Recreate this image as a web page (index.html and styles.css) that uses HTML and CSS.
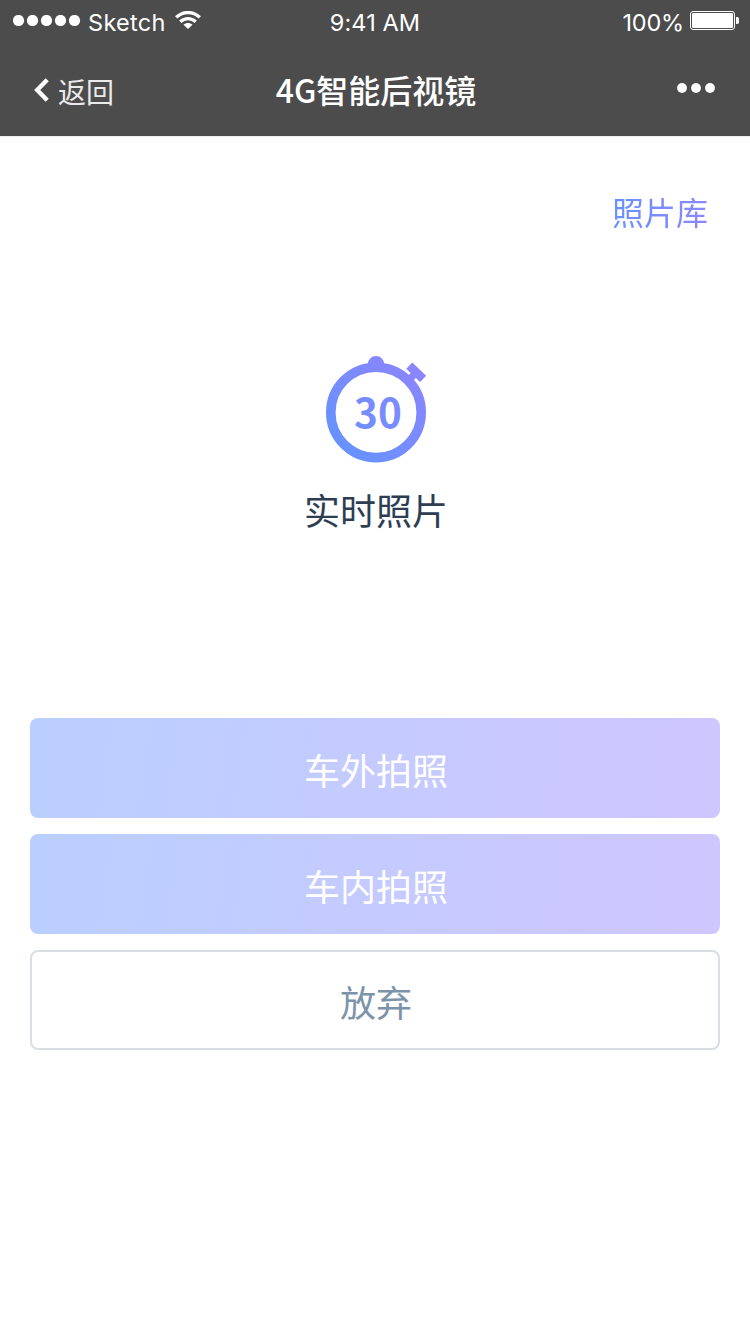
FILE: index.html
```html
<!DOCTYPE html>
<html lang="zh-CN">
<head>
<meta charset="utf-8">
<title>4G智能后视镜</title>
<link rel="stylesheet" href="styles.css">
</head>
<body>
<header class="header">
  <div class="status">
    <div class="status-left">
      <svg class="signal" width="68" height="12" viewBox="0 0 68 12" fill="#fff"><circle cx="5.5" cy="5.5" r="5.6"/><circle cx="19.5" cy="5.5" r="5.6"/><circle cx="33.5" cy="5.5" r="5.6"/><circle cx="47.5" cy="5.5" r="5.6"/><circle cx="61.5" cy="5.5" r="5.6"/></svg>
      <span class="carrier">Sketch</span>
      <svg class="wifi" width="26" height="19" viewBox="0 0 26 19"><g fill="none" stroke="#fff" stroke-width="3.3"><path d="M1.2 6.4C8-.1 18-.1 24.8 6.4"/><path d="M5.3 10.8c4.4-4.2 11-4.2 15.4 0"/></g><path fill="#fff" d="M8.5 13.7c2.6-2.4 6.4-2.4 9 0L13 18z"/></svg>
    </div>
    <div class="clock">9:41 AM</div>
    <div class="status-right">
      <span class="percent">100%</span>
      <svg class="battery" width="49" height="19" viewBox="0 0 49 19"><rect x=".5" y=".5" width="44" height="18" rx="2.5" fill="none" stroke="#fff"/><rect x="2" y="2" width="41" height="15" rx="1.2" fill="#fff"/><path fill="#fff" d="M46 6h1.2q1.8 0 1.8 1.8v3.4q0 1.8-1.8 1.8H46z"/></svg>
    </div>
  </div>
  <nav class="nav">
    <a class="back"><svg width="16" height="24" viewBox="0 0 16 24" fill="none" stroke="#fff" stroke-width="4.4"><path d="M14.2 1.8 4.2 12l10 10.2"/></svg><span>返回</span></a>
    <h1 class="title">4G智能后视镜</h1>
    <svg class="more" width="38" height="10" viewBox="0 0 38 10" fill="#fff"><circle cx="5" cy="5" r="4.9"/><circle cx="19" cy="5" r="4.9"/><circle cx="33" cy="5" r="4.9"/></svg>
  </nav>
</header>
<main class="main">
  <a class="gallery">照片库</a>
  <section class="timer">
    <svg class="watch" width="112" height="112" viewBox="320 352 112 112">
      <defs><linearGradient id="tint" gradientUnits="userSpaceOnUse" x1="340" y1="450" x2="415" y2="368"><stop offset="0" stop-color="#6692ff"/><stop offset="1" stop-color="#8b85ff"/></linearGradient></defs>
      <circle cx="376" cy="412.4" r="45.2" fill="none" stroke="url(#tint)" stroke-width="9.6"/>
      <path fill="url(#tint)" d="M367.7 364.3a8.3 8.3 0 0 1 16.6 0V367h-16.6zM412.3 362.5 426.2 375.8 420.1 382 415.9 377.9 411.4 382.4 406.4 377.4 410.6 372.9 406.3 368.7z"/>
      <text class="count" x="378" y="428.4" text-anchor="middle" fill="url(#tint)">30</text>
    </svg>
    <h2 class="caption">实时照片</h2>
  </section>
  <div class="actions">
    <button class="btn">车外拍照</button>
    <button class="btn">车内拍照</button>
    <button class="btn btn-plain">放弃</button>
  </div>
</main>
</body>
</html>
```
FILE: styles.css
```css
* { box-sizing: border-box; }
body {
  margin: 0;
  min-height: 1334px;
  background: #fff;
  color: #2d3e53;
  font-family: "Noto Sans CJK SC", sans-serif;
}
svg { display: block; flex: none; }
.header {
  height: 137px;
  border-bottom: 1px solid #f1ecf5;
  background: #4c4c4c;
  background-clip: padding-box;
  color: #fff;
}
.status {
  display: grid;
  grid-template-columns: 1fr auto 1fr;
  height: 40px;
  padding: 0 11px 0 13px;
  font-family: Inter, sans-serif;
  font-size: 23.5px;
  line-height: 28px;
}
.status-left, .status-right { display: flex; align-items: flex-start; }
.status-right { justify-content: flex-end; }
.signal { margin-top: 15px; }
.carrier, .clock, .percent { padding-top: 9px; font-weight: 400; }
.carrier { width: 78px; margin-left: 7px; letter-spacing: .3px; }
.clock { margin-left: -2px; letter-spacing: .1px; }
.percent { letter-spacing: -.2px; }
.wifi { margin: 11px 0 0 9px; }
.battery { margin: 11px 0 0 6px; }
.nav {
  display: grid;
  grid-template-columns: 1fr auto 1fr;
  height: 96px;
  padding: 0 35px 0 33px;
}
.back {
  display: flex;
  align-items: center;
  height: 100px;
  color: #ebebeb;
  font-size: 28px;
  line-height: 40px;
}
.back span { margin: 2px 0 0 9px; }
.title { margin: 25px -2px 0 2px; font-size: 32px; font-weight: 500; line-height: 48px; }
.more { justify-self: end; margin-top: 43px; }
.main { display: flex; flex-direction: column; padding: 50px 30px 0; }
.gallery {
  align-self: flex-end;
  margin-right: 12px;
  background: linear-gradient(80deg, #6692ff, #9086ff);
  background-clip: text;
  color: transparent;
  font-size: 32px;
  line-height: 48px;
}
.timer { display: flex; flex-direction: column; align-items: center; margin-top: 117px; }
.watch { margin-left: 2px; }
.count { font-size: 40.5px; font-weight: 700; }
.caption { margin: 18px 0 0 2px; font-size: 36px; font-weight: 400; line-height: 54px; }
.actions { display: grid; gap: 16px; margin-top: 182px; }
.btn {
  height: 100px;
  padding: 2px 0 0 2px;
  border: 0;
  border-radius: 8px;
  background: linear-gradient(98deg, #bacfff, #cfc6ff);
  color: #fff;
  font: 36px/54px "Noto Sans CJK SC", sans-serif;
}
.btn-plain { border: 2px solid #d8dee4; background: #fff; color: #7b94a9; }
```
